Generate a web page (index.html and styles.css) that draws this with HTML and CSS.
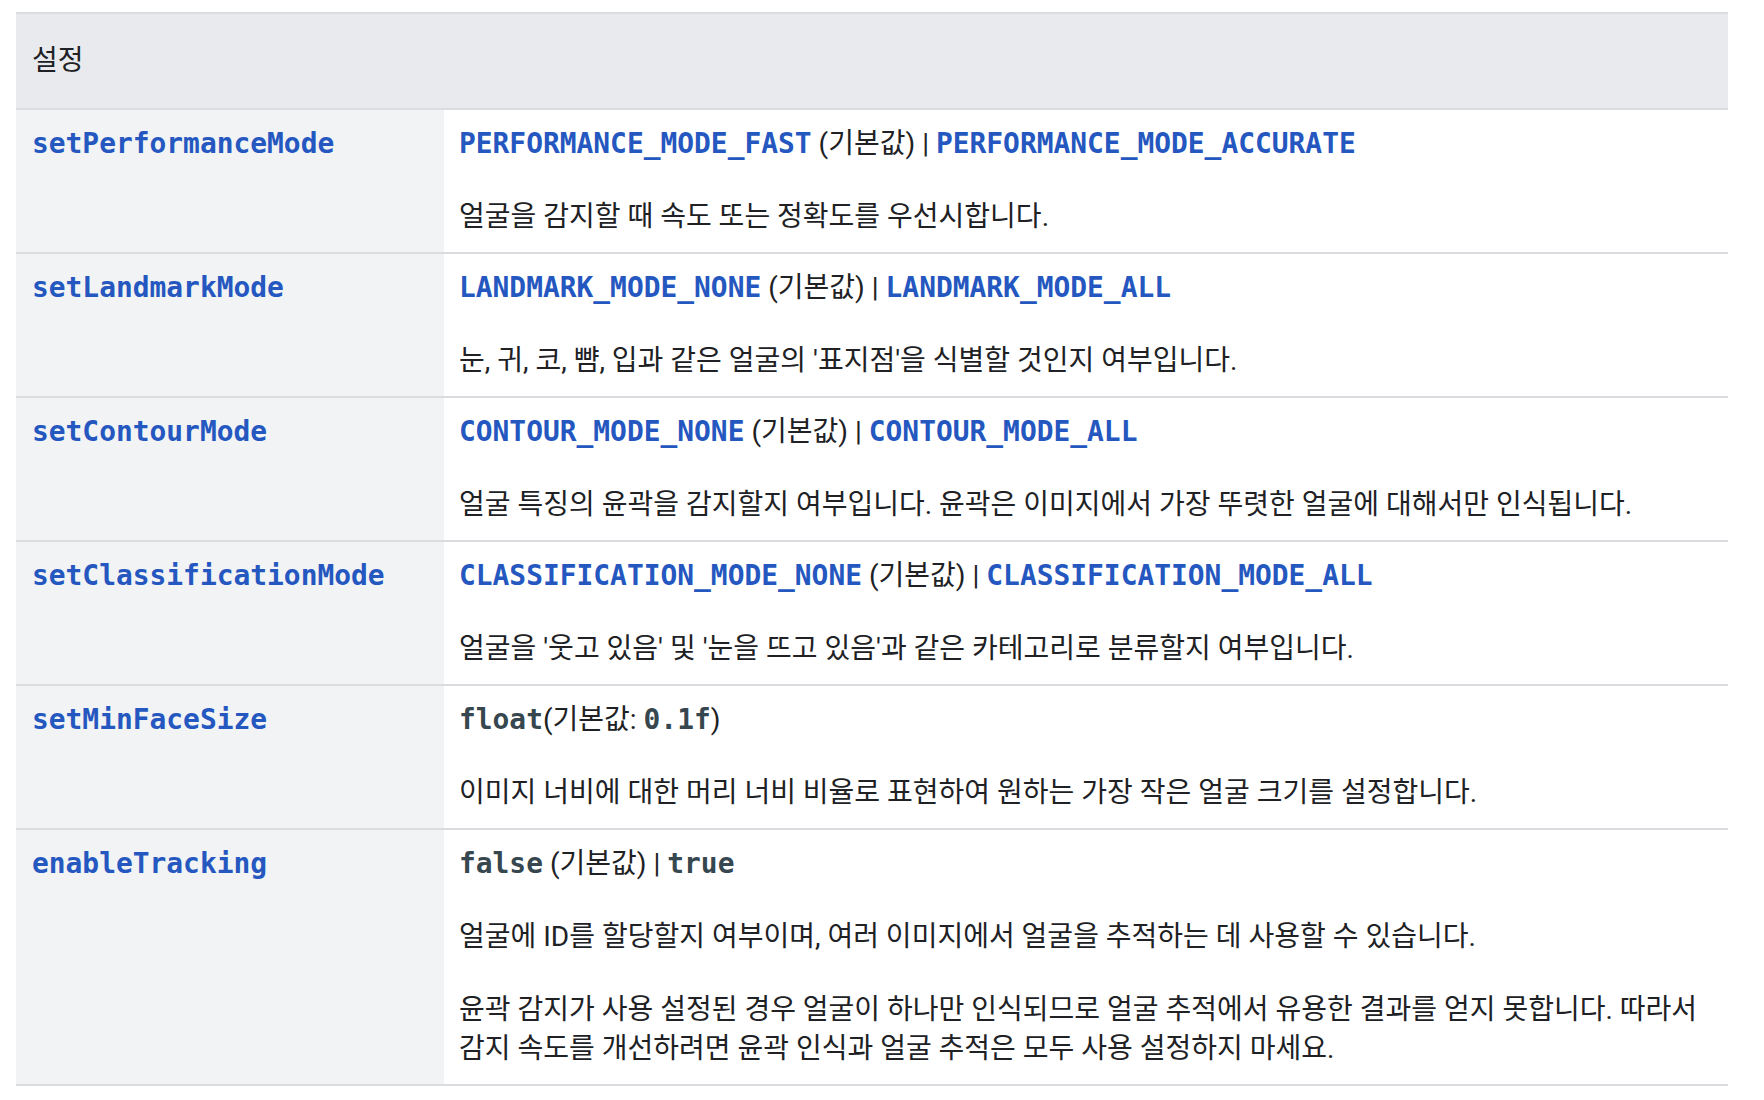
FILE: index.html
```html
<!DOCTYPE html>
<html lang="ko">
<head>
<meta charset="utf-8">
<title>설정</title>
<link rel="stylesheet" href="styles.css">
</head>
<body>
<div class="wrap">
<table class="settings">
  <thead>
    <tr><th colspan="2">설정</th></tr>
  </thead>
  <tbody>
    <tr>
      <td class="name"><code class="link">setPerformanceMode</code></td>
      <td class="desc">
        <p><code class="link">PERFORMANCE_MODE_FAST</code> (기본값) | <code class="link">PERFORMANCE_MODE_ACCURATE</code></p>
        <p>얼굴을 감지할 때 속도 또는 정확도를 우선시합니다.</p>
      </td>
    </tr>
    <tr>
      <td class="name"><code class="link">setLandmarkMode</code></td>
      <td class="desc">
        <p><code class="link">LANDMARK_MODE_NONE</code> (기본값) | <code class="link">LANDMARK_MODE_ALL</code></p>
        <p>눈, 귀, 코, 뺨, 입과 같은 얼굴의 '표지점'을 식별할 것인지 여부입니다.</p>
      </td>
    </tr>
    <tr>
      <td class="name"><code class="link">setContourMode</code></td>
      <td class="desc">
        <p><code class="link">CONTOUR_MODE_NONE</code> (기본값) | <code class="link">CONTOUR_MODE_ALL</code></p>
        <p>얼굴 특징의 윤곽을 감지할지 여부입니다. 윤곽은 이미지에서 가장 뚜렷한 얼굴에 대해서만 인식됩니다.</p>
      </td>
    </tr>
    <tr>
      <td class="name"><code class="link">setClassificationMode</code></td>
      <td class="desc">
        <p><code class="link">CLASSIFICATION_MODE_NONE</code> (기본값) | <code class="link">CLASSIFICATION_MODE_ALL</code></p>
        <p>얼굴을 '웃고 있음' 및 '눈을 뜨고 있음'과 같은 카테고리로 분류할지 여부입니다.</p>
      </td>
    </tr>
    <tr>
      <td class="name"><code class="link">setMinFaceSize</code></td>
      <td class="desc">
        <p><code class="plain">float</code>(기본값: <code class="plain">0.1f</code>)</p>
        <p>이미지 너비에 대한 머리 너비 비율로 표현하여 원하는 가장 작은 얼굴 크기를 설정합니다.</p>
      </td>
    </tr>
    <tr>
      <td class="name"><code class="link">enableTracking</code></td>
      <td class="desc">
        <p><code class="plain">false</code> (기본값) | <code class="plain">true</code></p>
        <p>얼굴에 ID를 할당할지 여부이며, 여러 이미지에서 얼굴을 추적하는 데 사용할 수 있습니다.</p>
        <p>윤곽 감지가 사용 설정된 경우 얼굴이 하나만 인식되므로 얼굴 추적에서 유용한 결과를 얻지 못합니다. 따라서 감지 속도를 개선하려면 윤곽 인식과 얼굴 추적은 모두 사용 설정하지 마세요.</p>
      </td>
    </tr>
  </tbody>
</table>
</div>
</body>
</html>
```

FILE: styles.css
```css
html, body {
  margin: 0;
  padding: 0;
  background: #ffffff;
}

body {
  font-family: Roboto, "Noto Sans CJK KR", "Noto Sans", sans-serif;
  font-size: 28px;
  line-height: 39px;
  color: #202124;
}

.wrap {
  padding: 12px 36px 0 16px;
}

.settings {
  width: 100%;
  border-collapse: collapse;
  border-top: 2px solid #dadce0;
}

.settings th {
  background: #e8eaed;
  text-align: left;
  font-weight: 400;
  padding: 27px 16px 28px 16px;
  border-bottom: 2px solid #dadce0;
}

.settings td {
  vertical-align: top;
  padding: 14px 16px 16px 15px;
  border-bottom: 2px solid #dadce0;
}

.settings td.name {
  width: 396px;
  background: #f1f3f4;
  padding-left: 16px;
  padding-right: 16px;
}

.settings td.desc {
  background: #ffffff;
}

.settings p {
  margin: 0 0 34px 0;
}

.settings p:last-child {
  margin-bottom: 0;
}

code {
  font-family: "DejaVu Sans Mono", "Liberation Mono", monospace;
  font-size: 27.9px;
  font-weight: 700;
}

code.link {
  color: #2557c0;
}

code.plain {
  color: #37474f;
}
```
